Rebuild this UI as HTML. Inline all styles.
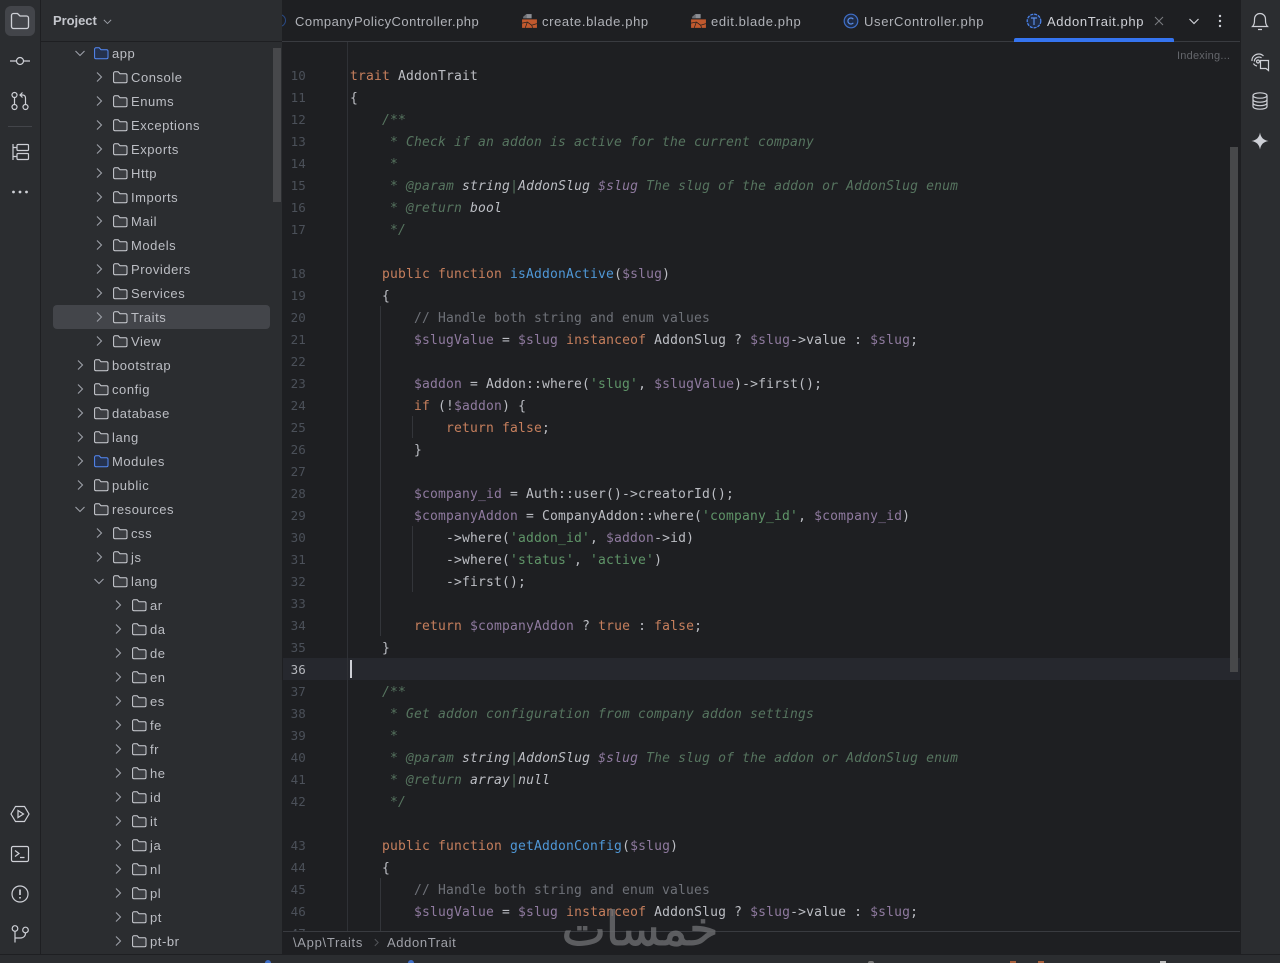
<!DOCTYPE html>
<html><head><meta charset="utf-8"><style>
html,body{margin:0;padding:0;background:#1e1f22;width:1280px;height:963px;overflow:hidden}
body{position:relative;font-family:"Liberation Sans",sans-serif}
.a{position:absolute}
#left{left:0;top:0;width:40px;height:954px;background:#2b2d30;border-right:1px solid #1e1f22}
#tree{left:41px;top:0;width:241px;height:954px;background:#2b2d30;overflow:hidden}
#right{left:1240px;top:0;width:40px;height:954px;background:#2b2d30;border-left:1px solid #1e1f22;box-sizing:border-box}
#status{left:0;top:954px;width:1280px;height:9px;background:#2b2d30;border-top:1px solid #1e1f22;box-sizing:border-box}
.r{position:absolute;height:24px;line-height:26px;font-size:13px;letter-spacing:.55px;color:#bcbec4;white-space:nowrap}
.r svg{position:absolute;top:4px}
.tab{position:absolute;top:11px;height:22px;line-height:22px;font-size:13px;letter-spacing:.62px;color:#b0b2b8;white-space:nowrap}
#code,#nums{position:absolute;font-family:"DejaVu Sans Mono",monospace;font-size:13px;line-height:22px;white-space:pre}
#code{letter-spacing:.174px;color:#bcbec4}
#nums{width:23px;text-align:right;color:#4b5059;letter-spacing:.174px;font-size:12.5px}
#clip{left:283px;top:42px;width:947px;height:889px;overflow:hidden}
#clip>#code{left:67px;top:24px}#clip>#nums{left:0;top:23px}
.k{color:#c67f5d}.v{color:#8f7a9f}.s{color:#5f9468}.c{color:#6e7178}.d{color:#56745f;font-style:italic}.t{color:#56745f;font-style:italic}.n{color:#bcbec4;font-style:italic}.f{color:#4f97d6}
svg.i{position:absolute;fill:none;stroke:#ced0d6;stroke-width:1.2}
</style></head><body>
<svg width="0" height="0" style="position:absolute"><defs>
<symbol id="fo" viewBox="0 0 16 16"><path d="M1.6 4.2C1.6 3.4 2.2 2.8 3 2.8H6.2L8 4.7H13.6C14.4 4.7 15 5.3 15 6.1V12.4C15 13.2 14.4 13.8 13.6 13.8H3C2.2 13.800 1.6 13.200 1.600 12.400Z" fill="#3c3e42" stroke="#ced0d6" stroke-width="1"/></symbol>
<symbol id="fb" viewBox="0 0 16 16"><path d="M1.6 4.2C1.6 3.4 2.200 2.800 3 2.800H6.200L8 4.700H13.600C14.400 4.700 15 5.300 15 6.100V12.400C15 13.200 14.400 13.800 13.600 13.800H3C2.200 13.800 1.600 13.200 1.600 12.400Z" fill="#25324d" stroke="#548af7" stroke-width="1"/></symbol>
<symbol id="cr" viewBox="0 0 16 16"><path d="M6 3.500L10.500 8L6 12.500" fill="none" stroke="#9da0a8" stroke-width="1.100"/></symbol>
<symbol id="cd" viewBox="0 0 16 16"><path d="M3.500 6L8 10.500L12.500 6" fill="none" stroke="#9da0a8" stroke-width="1.100"/></symbol>
<symbol id="bl" viewBox="0 0 16 16"><path d="M5 1H10V5H5Z" fill="#8c8e94"/><path d="M2 3.500L5 1V5H2Z" fill="#6e7076"/><path d="M1 6H15V14H1Z" fill="#c1592e"/><path d="M1 9.500L6 8.500L10 11.500L15 10M6 8.500L4 14M10 11.500L11 14" stroke="#26211f" stroke-width=".7" fill="none"/></symbol>
</defs></svg>

<div class="a" id="left"></div>
<div class="a" style="left:5px;top:6px;width:30px;height:30px;border-radius:6px;background:#43454a"></div>
<svg class="i" style="left:10px;top:11px;stroke-width:1.300" width="20" height="20" viewBox="0 0 20 20"><path d="M1.500 4.500C1.500 3.400 2.400 2.500 3.500 2.500H7.500L10 5H16.500C17.600 5 18.500 5.900 18.500 7V15.500C18.500 16.600 17.600 17.500 16.500 17.500H3.500C2.400 17.500 1.500 16.600 1.500 15.500Z"/></svg>
<svg class="i" style="left:10px;top:51px" width="20" height="20" viewBox="0 0 20 20"><circle cx="10" cy="10" r="3.500"/><path d="M0 10H6.500M13.500 10H20"/></svg>
<svg class="i" style="left:10px;top:91px" width="20" height="20" viewBox="0 0 20 20"><circle cx="4.500" cy="4" r="2.500"/><circle cx="4.500" cy="16" r="2.500"/><circle cx="15.500" cy="16" r="2.500"/><path d="M4.500 6.500V13.500M15.500 13.500V7C15.500 5 14.500 4 12.500 4H10M12.500 1.500L10 4L12.500 6.500"/></svg>
<div class="a" style="left:8px;top:126px;width:24px;height:1px;background:#43454a"></div>
<svg class="i" style="left:10px;top:142px" width="20" height="20" viewBox="0 0 20 20"><path d="M3 2V18M3 5.500H7M3 14.500H7"/><rect x="7" y="2.500" width="11.500" height="6" rx="1"/><rect x="7" y="11.500" width="11.500" height="6" rx="1"/></svg>
<svg class="a" style="left:10px;top:182px" width="20" height="20" viewBox="0 0 20 20"><circle cx="3.500" cy="10" r="1.400" fill="#ced0d6"/><circle cx="10" cy="10" r="1.400" fill="#ced0d6"/><circle cx="16.500" cy="10" r="1.400" fill="#ced0d6"/></svg>
<svg class="i" style="left:10px;top:804px" width="20" height="20" viewBox="0 0 20 20"><path d="M1 10L5.500 2.500H14.500L19 10L14.500 17.500H5.500Z"/><path d="M8 6.500L13.500 10L8 13.500Z"/></svg>
<svg class="i" style="left:10px;top:844px" width="20" height="20" viewBox="0 0 20 20"><rect x="1.500" y="2.500" width="17" height="15" rx="1.500"/><path d="M5 6.500L9 9.500L5 12.500M10 13.500H14.500"/></svg>
<svg class="i" style="left:10px;top:884px" width="20" height="20" viewBox="0 0 20 20"><circle cx="10" cy="10" r="8"/><path d="M10 5.500V11M10 13V14.500" stroke-width="1.700"/></svg>
<svg class="i" style="left:10px;top:924px" width="20" height="20" viewBox="0 0 20 20"><circle cx="5" cy="4.500" r="2.800"/><circle cx="15.500" cy="6" r="2.800"/><path d="M5 7.500V18.500M5 14H10.500C13.500 14 15.500 12 15.500 9"/></svg>

<div class="a" id="tree">
<div class="a" style="left:0;top:41px;width:241px;height:1px;background:#1e1f22"></div>
<div class="a" style="left:12px;top:10px;font-size:13px;font-weight:bold;letter-spacing:-.05px;line-height:22px;color:#c4c6cc">Project</div>
<svg class="a" style="left:60px;top:15px" width="13" height="13" viewBox="0 0 16 16"><use href="#cd"/></svg>
<div class="a" style="left:12px;top:305px;width:217px;height:24px;border-radius:4px;background:#43454a"></div>
<div class="a" style="left:232px;top:48px;width:8px;height:154px;background:#47484b"></div>

<div class="r" style="left:71px;top:41px"><svg style="left:-40px" width="16" height="16" viewBox="0 0 16 16"><use href="#cd"/></svg><svg style="left:-19px" width="16" height="16" viewBox="0 0 16 16"><use href="#fb"/></svg>app</div>
<div class="r" style="left:90px;top:65px"><svg style="left:-40px" width="16" height="16"><use href="#cr"/></svg><svg style="left:-19px" width="16" height="16"><use href="#fo"/></svg>Console</div>
<div class="r" style="left:90px;top:89px"><svg style="left:-40px" width="16" height="16"><use href="#cr"/></svg><svg style="left:-19px" width="16" height="16"><use href="#fo"/></svg>Enums</div>
<div class="r" style="left:90px;top:113px"><svg style="left:-40px" width="16" height="16"><use href="#cr"/></svg><svg style="left:-19px" width="16" height="16"><use href="#fo"/></svg>Exceptions</div>
<div class="r" style="left:90px;top:137px"><svg style="left:-40px" width="16" height="16"><use href="#cr"/></svg><svg style="left:-19px" width="16" height="16"><use href="#fo"/></svg>Exports</div>
<div class="r" style="left:90px;top:161px"><svg style="left:-40px" width="16" height="16"><use href="#cr"/></svg><svg style="left:-19px" width="16" height="16"><use href="#fo"/></svg>Http</div>
<div class="r" style="left:90px;top:185px"><svg style="left:-40px" width="16" height="16"><use href="#cr"/></svg><svg style="left:-19px" width="16" height="16"><use href="#fo"/></svg>Imports</div>
<div class="r" style="left:90px;top:209px"><svg style="left:-40px" width="16" height="16"><use href="#cr"/></svg><svg style="left:-19px" width="16" height="16"><use href="#fo"/></svg>Mail</div>
<div class="r" style="left:90px;top:233px"><svg style="left:-40px" width="16" height="16"><use href="#cr"/></svg><svg style="left:-19px" width="16" height="16"><use href="#fo"/></svg>Models</div>
<div class="r" style="left:90px;top:257px"><svg style="left:-40px" width="16" height="16"><use href="#cr"/></svg><svg style="left:-19px" width="16" height="16"><use href="#fo"/></svg>Providers</div>
<div class="r" style="left:90px;top:281px"><svg style="left:-40px" width="16" height="16"><use href="#cr"/></svg><svg style="left:-19px" width="16" height="16"><use href="#fo"/></svg>Services</div>
<div class="r" style="left:90px;top:305px"><svg style="left:-40px" width="16" height="16"><use href="#cr"/></svg><svg style="left:-19px" width="16" height="16"><use href="#fo"/></svg>Traits</div>
<div class="r" style="left:90px;top:329px"><svg style="left:-40px" width="16" height="16"><use href="#cr"/></svg><svg style="left:-19px" width="16" height="16"><use href="#fo"/></svg>View</div>
<div class="r" style="left:71px;top:353px"><svg style="left:-40px" width="16" height="16"><use href="#cr"/></svg><svg style="left:-19px" width="16" height="16"><use href="#fo"/></svg>bootstrap</div>
<div class="r" style="left:71px;top:377px"><svg style="left:-40px" width="16" height="16"><use href="#cr"/></svg><svg style="left:-19px" width="16" height="16"><use href="#fo"/></svg>config</div>
<div class="r" style="left:71px;top:401px"><svg style="left:-40px" width="16" height="16"><use href="#cr"/></svg><svg style="left:-19px" width="16" height="16"><use href="#fo"/></svg>database</div>
<div class="r" style="left:71px;top:425px"><svg style="left:-40px" width="16" height="16"><use href="#cr"/></svg><svg style="left:-19px" width="16" height="16"><use href="#fo"/></svg>lang</div>
<div class="r" style="left:71px;top:449px"><svg style="left:-40px" width="16" height="16"><use href="#cr"/></svg><svg style="left:-19px" width="16" height="16"><use href="#fb"/></svg>Modules</div>
<div class="r" style="left:71px;top:473px"><svg style="left:-40px" width="16" height="16"><use href="#cr"/></svg><svg style="left:-19px" width="16" height="16"><use href="#fo"/></svg>public</div>
<div class="r" style="left:71px;top:497px"><svg style="left:-40px" width="16" height="16"><use href="#cd"/></svg><svg style="left:-19px" width="16" height="16"><use href="#fo"/></svg>resources</div>
<div class="r" style="left:90px;top:521px"><svg style="left:-40px" width="16" height="16"><use href="#cr"/></svg><svg style="left:-19px" width="16" height="16"><use href="#fo"/></svg>css</div>
<div class="r" style="left:90px;top:545px"><svg style="left:-40px" width="16" height="16"><use href="#cr"/></svg><svg style="left:-19px" width="16" height="16"><use href="#fo"/></svg>js</div>
<div class="r" style="left:90px;top:569px"><svg style="left:-40px" width="16" height="16"><use href="#cd"/></svg><svg style="left:-19px" width="16" height="16"><use href="#fo"/></svg>lang</div>
<div class="r" style="left:109px;top:593px"><svg style="left:-40px" width="16" height="16"><use href="#cr"/></svg><svg style="left:-19px" width="16" height="16"><use href="#fo"/></svg>ar</div>
<div class="r" style="left:109px;top:617px"><svg style="left:-40px" width="16" height="16"><use href="#cr"/></svg><svg style="left:-19px" width="16" height="16"><use href="#fo"/></svg>da</div>
<div class="r" style="left:109px;top:641px"><svg style="left:-40px" width="16" height="16"><use href="#cr"/></svg><svg style="left:-19px" width="16" height="16"><use href="#fo"/></svg>de</div>
<div class="r" style="left:109px;top:665px"><svg style="left:-40px" width="16" height="16"><use href="#cr"/></svg><svg style="left:-19px" width="16" height="16"><use href="#fo"/></svg>en</div>
<div class="r" style="left:109px;top:689px"><svg style="left:-40px" width="16" height="16"><use href="#cr"/></svg><svg style="left:-19px" width="16" height="16"><use href="#fo"/></svg>es</div>
<div class="r" style="left:109px;top:713px"><svg style="left:-40px" width="16" height="16"><use href="#cr"/></svg><svg style="left:-19px" width="16" height="16"><use href="#fo"/></svg>fe</div>
<div class="r" style="left:109px;top:737px"><svg style="left:-40px" width="16" height="16"><use href="#cr"/></svg><svg style="left:-19px" width="16" height="16"><use href="#fo"/></svg>fr</div>
<div class="r" style="left:109px;top:761px"><svg style="left:-40px" width="16" height="16"><use href="#cr"/></svg><svg style="left:-19px" width="16" height="16"><use href="#fo"/></svg>he</div>
<div class="r" style="left:109px;top:785px"><svg style="left:-40px" width="16" height="16"><use href="#cr"/></svg><svg style="left:-19px" width="16" height="16"><use href="#fo"/></svg>id</div>
<div class="r" style="left:109px;top:809px"><svg style="left:-40px" width="16" height="16"><use href="#cr"/></svg><svg style="left:-19px" width="16" height="16"><use href="#fo"/></svg>it</div>
<div class="r" style="left:109px;top:833px"><svg style="left:-40px" width="16" height="16"><use href="#cr"/></svg><svg style="left:-19px" width="16" height="16"><use href="#fo"/></svg>ja</div>
<div class="r" style="left:109px;top:857px"><svg style="left:-40px" width="16" height="16"><use href="#cr"/></svg><svg style="left:-19px" width="16" height="16"><use href="#fo"/></svg>nl</div>
<div class="r" style="left:109px;top:881px"><svg style="left:-40px" width="16" height="16"><use href="#cr"/></svg><svg style="left:-19px" width="16" height="16"><use href="#fo"/></svg>pl</div>
<div class="r" style="left:109px;top:905px"><svg style="left:-40px" width="16" height="16"><use href="#cr"/></svg><svg style="left:-19px" width="16" height="16"><use href="#fo"/></svg>pt</div>
<div class="r" style="left:109px;top:929px"><svg style="left:-40px" width="16" height="16"><use href="#cr"/></svg><svg style="left:-19px" width="16" height="16"><use href="#fo"/></svg>pt-br</div>
</div>

<!-- tabs -->
<div class="a" style="left:282px;top:41px;width:958px;height:1px;background:#393b40"></div>
<div class="a" style="left:282px;top:14px;width:6px;height:14px;overflow:hidden"><div style="margin-left:-9px;width:11px;height:11px;border:1.300px solid #2a4a86;border-radius:50%"></div></div>
<div class="tab" style="left:295px;letter-spacing:.48px">CompanyPolicyController.php</div>
<svg class="a" style="left:521px;top:13px" width="17" height="17" viewBox="0 0 16 16"><use href="#bl"/></svg>
<div class="tab" style="left:542px">create.blade.php</div>
<svg class="a" style="left:690px;top:13px" width="17" height="17" viewBox="0 0 16 16"><use href="#bl"/></svg>
<div class="tab" style="left:711px">edit.blade.php</div>
<svg class="a" style="left:843px;top:13px" width="16" height="16" viewBox="0 0 16 16"><circle cx="8" cy="8" r="6.800" fill="#1f2b44" stroke="#3f6fc8" stroke-width="1.200"/><path d="M10.300 6.200A3 3 0 1 0 10.300 9.800" fill="none" stroke="#5a8ee8" stroke-width="1.200"/></svg>
<div class="tab" style="left:864px;letter-spacing:.65px">UserController.php</div>
<svg class="a" style="left:1026px;top:13px" width="16" height="16" viewBox="0 0 16 16"><circle cx="8" cy="8" r="6.800" fill="#1f2b44" stroke="#4a82e8" stroke-width="1.300" stroke-dasharray="3 1"/><path d="M5 5H11M8 5V12" fill="none" stroke="#5a8ee8" stroke-width="1.200"/></svg>
<div class="tab" style="left:1047px;color:#ced0d6">AddonTrait.php</div>
<svg class="a" style="left:1154px;top:16px" width="10" height="10" viewBox="0 0 10 10"><path d="M1 1L9 9M9 1L1 9" stroke="#7a7c82" stroke-width="1"/></svg>
<div class="a" style="left:1014px;top:38px;width:160px;height:4px;background:#3574f0;border-radius:2px 2px 0 0"></div>
<svg class="a" style="left:1186px;top:13px" width="16" height="16" viewBox="0 0 16 16"><path d="M3.500 6L8 10.500L12.500 6" fill="none" stroke="#ced0d6" stroke-width="1.200"/></svg>
<svg class="a" style="left:1212px;top:13px" width="16" height="16" viewBox="0 0 16 16"><circle cx="8" cy="3" r="1.200" fill="#ced0d6"/><circle cx="8" cy="8" r="1.200" fill="#ced0d6"/><circle cx="8" cy="13" r="1.200" fill="#ced0d6"/></svg>
<div class="a" style="left:1177px;top:48px;font-size:11px;letter-spacing:.22px;line-height:16px;color:#64666b">Indexing...</div>

<!-- editor -->
<div class="a" style="left:283px;top:658px;width:957px;height:22px;background:#26282e"></div>
<div class="a" style="left:347px;top:42px;width:1px;height:889px;background:#2f3136"></div>
<div class="a" style="left:380px;top:306px;width:1px;height:330px;background:#33353a"></div>
<div class="a" style="left:380px;top:878px;width:1px;height:53px;background:#33353a"></div>
<div class="a" style="left:412px;top:416px;width:1px;height:22px;background:#33353a"></div>
<div class="a" style="left:412px;top:526px;width:1px;height:66px;background:#33353a"></div>
<div class="a" id="clip">
<div id="nums">10
11
12
13
14
15
16
17

18
19
20
21
22
23
24
25
26
27
28
29
30
31
32
33
34
35
<span style="color:#b4b6bc">36</span>
37
38
39
40
41
42

43
44
45
46
47</div>
<div id="code"><span class="k">trait</span> AddonTrait
{
    <span class="d">/**</span>
     <span class="d">* Check if an addon is active for the current company</span>
     <span class="d">*</span>
     <span class="d">* @param</span> <span class="n">string</span><span class="d">|</span><span class="n">AddonSlug</span> <span class="v" style="font-style:italic">$slug</span> <span class="d">The slug of the addon or AddonSlug enum</span>
     <span class="d">* @return</span> <span class="n">bool</span>
     <span class="d">*/</span>

    <span class="k">public function</span> <span class="f">isAddonActive</span>(<span class="v">$slug</span>)
    {
        <span class="c">// Handle both string and enum values</span>
        <span class="v">$slugValue</span> = <span class="v">$slug</span> <span class="k">instanceof</span> AddonSlug ? <span class="v">$slug</span>-&gt;value : <span class="v">$slug</span>;

        <span class="v">$addon</span> = Addon::where(<span class="s">'slug'</span>, <span class="v">$slugValue</span>)-&gt;first();
        <span class="k">if</span> (!<span class="v">$addon</span>) {
            <span class="k">return false</span>;
        }

        <span class="v">$company_id</span> = Auth::user()-&gt;creatorId();
        <span class="v">$companyAddon</span> = CompanyAddon::where(<span class="s">'company_id'</span>, <span class="v">$company_id</span>)
            -&gt;where(<span class="s">'addon_id'</span>, <span class="v">$addon</span>-&gt;id)
            -&gt;where(<span class="s">'status'</span>, <span class="s">'active'</span>)
            -&gt;first();

        <span class="k">return</span> <span class="v">$companyAddon</span> ? <span class="k">true</span> : <span class="k">false</span>;
    }

    <span class="d">/**</span>
     <span class="d">* Get addon configuration from company addon settings</span>
     <span class="d">*</span>
     <span class="d">* @param</span> <span class="n">string</span><span class="d">|</span><span class="n">AddonSlug</span> <span class="v" style="font-style:italic">$slug</span> <span class="d">The slug of the addon or AddonSlug enum</span>
     <span class="d">* @return</span> <span class="n">array</span><span class="d">|</span><span class="n">null</span>
     <span class="d">*/</span>

    <span class="k">public function</span> <span class="f">getAddonConfig</span>(<span class="v">$slug</span>)
    {
        <span class="c">// Handle both string and enum values</span>
        <span class="v">$slugValue</span> = <span class="v">$slug</span> <span class="k">instanceof</span> AddonSlug ? <span class="v">$slug</span>-&gt;value : <span class="v">$slug</span>;
</div>
</div>
<div class="a" style="left:350px;top:660px;width:2px;height:18px;background:#ced0d6"></div>
<div class="a" style="left:1230px;top:147px;width:8px;height:525px;background:#47484a"></div>

<!-- breadcrumb -->
<div class="a" style="left:283px;top:931px;width:957px;height:23px;background:#1e1f22;border-top:1px solid #393b40;box-sizing:border-box"></div>
<div class="a" style="left:293px;top:932px;font-size:13px;letter-spacing:.7px;line-height:21px;color:#9fa1a8">\App\Traits</div>
<svg class="a" style="left:372px;top:938px" width="9" height="9" viewBox="0 0 16 16"><path d="M5 2L11 8L5 14" fill="none" stroke="#55575c" stroke-width="1.600"/></svg>
<div class="a" style="left:387px;top:932px;font-size:13px;letter-spacing:.62px;line-height:21px;color:#9fa1a8">AddonTrait</div>

<!-- watermark -->
<div class="a" dir="rtl" style="left:540px;top:904px;width:200px;height:52px;text-align:center;font-family:'DejaVu Sans',sans-serif;font-size:47px;line-height:52px;color:#6c6d70;opacity:.8;-webkit-text-stroke:1px #6c6d70">خمسات</div>

<div class="a" id="right"></div>
<svg class="i" style="left:1250px;top:11px" width="20" height="20" viewBox="0 0 20 20"><path d="M2.500 15.500C4 14 4.500 12.500 4.500 9.500V8C4.500 4.800 7 2.500 10 2.500S15.500 4.800 15.500 8V9.500C15.500 12.500 16 14 17.500 15.500ZM8 18.500H12"/></svg>
<svg class="i" style="left:1250px;top:52px" width="20" height="20" viewBox="0 0 20 20"><path d="M2 9C1.500 5 5 2 9 2C11 2 12.500 3 13.500 4M4.500 9.500C4 7 6.500 5 9 5C10 5 11 5.300 11.500 6"/><circle cx="8" cy="9.500" r="1.500"/><path d="M7 14C5 13.500 4 12.500 3.500 11.500M10.500 8.500H18.500V18.500L16 16.500H10.500Z"/></svg>
<svg class="i" style="left:1250px;top:91px" width="20" height="20" viewBox="0 0 20 20"><ellipse cx="10" cy="4.500" rx="7" ry="2.700"/><path d="M3 4.500V15.500C3 17 6 18.200 10 18.200S17 17 17 15.500V4.500M3 8.500C3 10 6 11.200 10 11.200S17 10 17 8.500M3 12C3 13.500 6 14.700 10 14.700S17 13.500 17 12"/></svg>
<svg class="a" style="left:1250px;top:131px" width="20" height="20" viewBox="0 0 20 20"><path d="M10 1.500C10.800 6.500 13.500 9.200 18.500 10C13.500 10.800 10.800 13.500 10 18.500C9.200 13.500 6.500 10.800 1.500 10C6.500 9.200 9.200 6.500 10 1.500Z" fill="#ced0d6"/></svg>

<div class="a" id="status"></div>
<div class="a" style="left:265px;top:960px;width:6px;height:3px;background:#3f6fc8;border-radius:3px 3px 0 0"></div>
<div class="a" style="left:408px;top:960px;width:6px;height:3px;background:#3f6fc8;border-radius:3px 3px 0 0"></div>
<div class="a" style="left:868px;top:961px;width:6px;height:2px;background:#777;border-radius:3px 3px 0 0"></div>
<div class="a" style="left:1010px;top:961px;width:6px;height:2px;background:#a8603c"></div>
<div class="a" style="left:1038px;top:961px;width:6px;height:2px;background:#a8603c"></div>
<div class="a" style="left:1160px;top:961px;width:6px;height:2px;background:#bbb"></div>
</body></html>
